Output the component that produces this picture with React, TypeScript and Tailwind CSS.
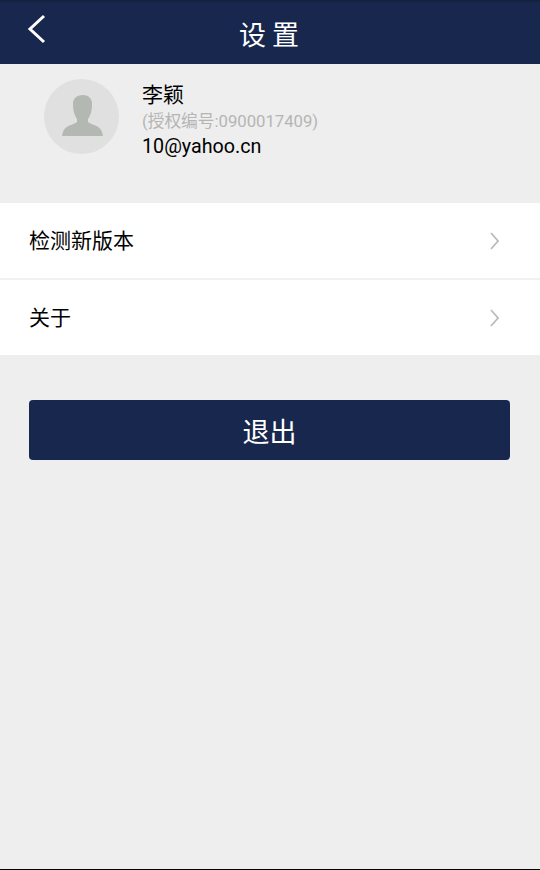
const font = "font-['Roboto','Noto_Sans_CJK_SC',sans-serif]";

function Row({ label }: { label: string }) {
  return (
    <div className="flex h-[75px] items-center justify-between bg-white pl-[29px] pr-[41px] text-[21px] text-black">
      <span className="mt-[3px]">{label}</span>
      <svg width="9" height="18" viewBox="0 0 9 18" fill="none">
        <path d="M1 1 L8 9 L1 17" stroke="#b9b9b9" strokeWidth="1.7" />
      </svg>
    </div>
  );
}

export default function App() {
  return (
    <div className={`flex h-[870px] w-[540px] flex-col overflow-hidden bg-[#eeeeee] ${font}`}>
      {/* Header */}
      <div className="relative flex h-[64px] items-center justify-center border-t-2 border-[#15223f] bg-[#18274e] pl-[4px] text-[27px] tracking-[6px] text-white">
        <svg className="absolute left-[26px] top-[11px]" width="22" height="32" viewBox="0 0 22 32" fill="none">
          <path d="M18 3 L4 16 L18 29" stroke="#fff" strokeWidth="3" />
        </svg>
        <span className="mt-[6px]">设置</span>
      </div>

      {/* Profile */}
      <div className="flex h-[139px] pl-[44px] pt-[15px]">
        <div className="flex h-[75px] w-[75px] items-center justify-center rounded-full bg-[#dfe0df]">
          <svg width="42" height="41" viewBox="0 0 42 41" fill="#b3b8b2" className="mt-[-3px] ml-[2px]">
            <path d="M21 0 C14 0 11 4 11 9 C11 15 12 20 15 24 L15 27 C12 30 3 30 1 37 L0 41 L41 41 L40 37 C38 30 29 30 26 27 L26 24 C29 20 30 15 30 9 C30 4 27 0 21 0 Z" />
          </svg>
        </div>
        <div className="ml-[23px] flex flex-col">
          <span className="text-[21px] leading-[30px] mt-[1px] text-black">李颖</span>
          <span className="text-[16.7px] leading-[22px] mt-[1px] text-[#b5b5b5]">(授权编号:0900017409)</span>
          <span className="text-[19.7px] leading-[28px] text-black">10@yahoo.cn</span>
        </div>
      </div>

      {/* Menu */}
      <Row label="检测新版本" />
      <div className="h-[2px] bg-[#f1f1f1]" />
      <Row label="关于" />

      {/* Logout */}
      <button className="ml-[29px] mt-[45px] h-[60px] w-[481px] rounded-[4px] bg-[#18274e] pt-[6px] text-[27px] text-white">
        退出
      </button>

      <div className="flex-1" />
      <div className="h-[1px] bg-black" />
    </div>
  );
}
